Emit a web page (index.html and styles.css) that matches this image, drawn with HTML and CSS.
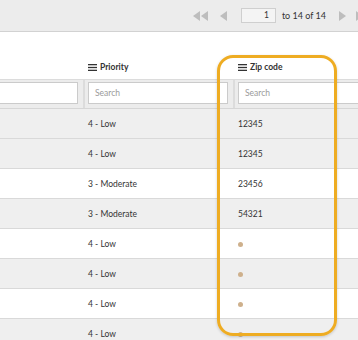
FILE: index.html
```html
<!DOCTYPE html>
<html>
<head>
<meta charset="utf-8">
<link rel="stylesheet" href="styles.css">
</head>
<body>
<div class="viewport">
  <div class="page">
    <div class="pager">
      <svg class="pg-icon first" width="16" height="10" viewBox="0 0 16 10"><polygon points="7,0 7,10 0,5"/><polygon points="15,0 15,10 8,5"/></svg>
      <svg class="pg-icon prev" width="8" height="10" viewBox="0 0 8 10"><polygon points="7,0 7,10 0,5"/></svg>
      <div class="pg-input">1</div>
      <span class="pg-text">to 14 of 14</span>
      <svg class="pg-icon next" width="8" height="10" viewBox="0 0 8 10"><polygon points="1,0 1,10 8,5"/></svg>
      <svg class="pg-icon last" width="12" height="10" viewBox="0 0 12 10"><polygon points="1,0 1,10 8,5"/><rect x="9" y="0" width="2" height="10"/></svg>
    </div>

    <div class="grid">
      <div class="row head">
        <div class="cell"></div>
        <div class="cell"><span class="label"><svg class="menu" width="9" height="7" viewBox="0 0 9 7"><rect y="0" width="9" height="1.3"/><rect y="2.85" width="9" height="1.3"/><rect y="5.7" width="9" height="1.3"/></svg>Priority</span></div>
        <div class="cell"><span class="label"><svg class="menu" width="9" height="7" viewBox="0 0 9 7"><rect y="0" width="9" height="1.3"/><rect y="2.85" width="9" height="1.3"/><rect y="5.7" width="9" height="1.3"/></svg>Zip code</span></div>
        <div class="cell"></div>
      </div>
      <div class="row filters">
        <div class="cell"><div class="search"></div></div>
        <div class="cell"><div class="search">Search</div></div>
        <div class="cell"><div class="search">Search</div></div>
        <div class="cell"><div class="search"></div></div>
      </div>
      <div class="row alt"><div class="cell"></div><div class="cell">4 - Low</div><div class="cell">12345</div><div class="cell"></div></div>
      <div class="row alt"><div class="cell">Network outage</div><div class="cell">4 - Low</div><div class="cell">12345</div><div class="cell"></div></div>
      <div class="row"><div class="cell"></div><div class="cell">3 - Moderate</div><div class="cell">23456</div><div class="cell"></div></div>
      <div class="row alt"><div class="cell"></div><div class="cell">3 - Moderate</div><div class="cell">54321</div><div class="cell"></div></div>
      <div class="row"><div class="cell"></div><div class="cell">4 - Low</div><div class="cell"><span class="dot"></span></div><div class="cell"></div></div>
      <div class="row alt"><div class="cell"></div><div class="cell">4 - Low</div><div class="cell"><span class="dot"></span></div><div class="cell"></div></div>
      <div class="row"><div class="cell"></div><div class="cell">4 - Low</div><div class="cell"><span class="dot"></span></div><div class="cell"></div></div>
      <div class="row alt"><div class="cell"></div><div class="cell">4 - Low</div><div class="cell"><span class="dot"></span></div><div class="cell"></div></div>
    </div>
  </div>
  <div class="highlight"></div>
</div>
</body>
</html>
```

FILE: styles.css
```css
html, body {
  margin: 0;
  padding: 0;
  background: #ffffff;
}
body {
  font-family: Lato, "Liberation Sans", sans-serif;
  font-size: 8.5px;
  color: #333333;
}
.viewport {
  position: relative;
  width: 358px;
  height: 340px;
  overflow: hidden;
}
.page {
  width: 440px;
  margin-left: -67px;
}
.pager {
  height: 31px;
  background: #ececec;
  border-bottom: 1px solid #d2d2d2;
  display: flex;
  align-items: center;
  justify-content: flex-end;
  padding-right: 6px;
}
.pg-icon {
  fill: #bdbdbd;
  display: block;
}
.first { margin-right: 11px; }
.prev { margin-right: 13px; }
.pg-input {
  width: 35px;
  height: 15px;
  box-sizing: border-box;
  border: 1px solid #cfcfcf;
  background: #f4f4f4;
  text-align: right;
  padding-right: 6px;
  line-height: 13px;
  color: #333;
  margin-right: 6px;
}
.pg-text {
  margin-right: 12px;
  font-size: 9px;
}
.next { margin-right: 9px; }

.row {
  display: grid;
  grid-template-columns: 150px 150px 140px 1fr;
  height: 30px;
  box-sizing: border-box;
  border-bottom: 1px solid #d9d9d9;
  align-items: center;
}
.cell {
  padding: 0 5px;
  white-space: nowrap;
  overflow: hidden;
}
.row.alt { background: #efefef; }
.row.head {
  height: 48px;
  align-items: end;
  border-bottom: 1px solid #dcdcdc;
  padding-bottom: 7px;
}
.label {
  display: flex;
  align-items: center;
  gap: 3px;
  font-weight: 700;
  color: #333;
}
.menu { fill: #333; display: block; }
.row.filters {
  height: 29px;
  background: #ececec;
  border-bottom: 1px solid #d6d6d6;
  align-items: stretch;
}
.filters .cell {
  padding: 2px 5px 4px;
  display: flex;
  align-items: stretch;
}
.filters .cell + .cell {
  box-shadow: inset 2px 0 0 #dcdcdc;
}
.search {
  flex: 1;
  background: #ffffff;
  border: 1px solid #cbcbcb;
  box-sizing: border-box;
  color: #9a9a9a;
  padding-left: 6px;
  display: flex;
  align-items: center;
}
.dot {
  display: inline-block;
  width: 5px;
  height: 5px;
  border-radius: 50%;
  background: #ceb08c;
  vertical-align: middle;
}
.highlight {
  position: absolute;
  left: 217px;
  top: 55px;
  width: 120px;
  height: 281px;
  box-sizing: border-box;
  border: 3px solid #eeac22;
  border-radius: 16px;
  box-shadow: 0 1px 3px rgba(0,0,0,0.18);
}
```
